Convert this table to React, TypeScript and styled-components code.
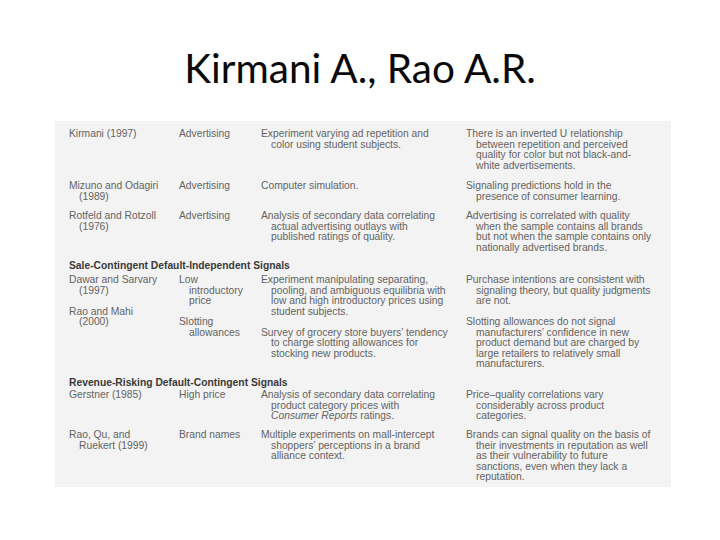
import React from "react";
import styled, { createGlobalStyle } from "styled-components";

const Global = createGlobalStyle`
  html, body { margin: 0; padding: 0; background: #ffffff; }
  body { width: 720px; height: 540px; overflow: hidden; }
`;

const Slide = styled.div`
  width: 720px;
  height: 540px;
  display: flex;
  flex-direction: column;
  align-items: flex-start;
`;

const Title = styled.h1`
  align-self: stretch;
  margin: 41px 0 0 0;
  height: 80px;
  font-family: Lato, "Open Sans", sans-serif;
  font-weight: 400;
  font-size: 40.5px;
  line-height: 53px;
  color: #0a0a0a;
  text-align: center;
`;

const Scan = styled.div`
  margin-left: 55px;
  width: 616px;
  height: 366px;
  box-sizing: border-box;
  padding: 8px 0 0 14px;
  background: #f3f3f3;
  display: flex;
  flex-direction: column;
  font-family: "Liberation Sans", Arial, sans-serif;
  font-size: 10.3px;
  line-height: 10.5px;
  color: #636363;
`;

const Row = styled.div<{ $space: number }>`
  display: grid;
  grid-template-columns: 110px 82px 205px 1fr;
  margin-top: ${(p) => p.$space}px;
`;

const Cell = styled.div`
  display: flex;
  flex-direction: column;
  gap: 10.5px;
`;

const Entry = styled.div`
  display: flex;
  flex-direction: column;
`;

const Line = styled.span`
  white-space: nowrap;
  & + & { padding-left: 10px; }
`;

const SectionHead = styled.div<{ $space: number }>`
  margin-top: ${(p) => p.$space}px;
  font-weight: 700;
  color: #3a3a3a;
  white-space: nowrap;
`;

type E = React.ReactNode[];

const entry = (lines: E, key?: number) => (
  <Entry key={key}>
    {lines.map((l, i) => (
      <Line key={i}>{l}</Line>
    ))}
  </Entry>
);

const SimpleRow = ({ space, cols }: { space: number; cols: E[] }) => (
  <Row $space={space}>
    {cols.map((c, i) => (
      <Cell key={i}>{entry(c)}</Cell>
    ))}
  </Row>
);

export default function App() {
  return (
    <>
      <Global />
      <Slide>
        <Title>Kirmani A., Rao A.R.</Title>
        <Scan>
          <SimpleRow
            space={0}
            cols={[
              ["Kirmani (1997)"],
              ["Advertising"],
              ["Experiment varying ad repetition and", "color using student subjects."],
              [
                "There is an inverted U relationship",
                "between repetition and perceived",
                "quality for color but not black-and-",
                "white advertisements.",
              ],
            ]}
          />
          <SimpleRow
            space={10}
            cols={[
              ["Mizuno and Odagiri", "(1989)"],
              ["Advertising"],
              ["Computer simulation."],
              ["Signaling predictions hold in the", "presence of consumer learning."],
            ]}
          />
          <SimpleRow
            space={9}
            cols={[
              ["Rotfeld and Rotzoll", "(1976)"],
              ["Advertising"],
              [
                "Analysis of secondary data correlating",
                "actual advertising outlays with",
                "published ratings of quality.",
              ],
              [
                "Advertising is correlated with quality",
                "when the sample contains all brands",
                "but not when the sample contains only",
                "nationally advertised brands.",
              ],
            ]}
          />
          <SectionHead $space={8}>Sale-Contingent Default-Independent Signals</SectionHead>
          <Row $space={3.5}>
            <Cell>
              {entry(["Dawar and Sarvary", "(1997)"])}
              {entry(["Rao and Mahi", "(2000)"])}
            </Cell>
            <Cell>
              {entry(["Low", "introductory", "price"])}
              {entry(["Slotting", "allowances"])}
            </Cell>
            <Cell>
              {entry([
                "Experiment manipulating separating,",
                "pooling, and ambiguous equilibria with",
                "low and high introductory prices using",
                "student subjects.",
              ])}
              {entry([
                "Survey of grocery store buyers\u2019 tendency",
                "to charge slotting allowances for",
                "stocking new products.",
              ])}
            </Cell>
            <Cell>
              {entry([
                "Purchase intentions are consistent with",
                "signaling theory, but quality judgments",
                "are not.",
              ])}
              {entry([
                "Slotting allowances do not signal",
                "manufacturers\u2019 confidence in new",
                "product demand but are charged by",
                "large retailers to relatively small",
                "manufacturers.",
              ])}
            </Cell>
          </Row>
          <SectionHead $space={8.5}>Revenue-Risking Default-Contingent Signals</SectionHead>
          <SimpleRow
            space={1.5}
            cols={[
              ["Gerstner (1985)"],
              ["High price"],
              [
                "Analysis of secondary data correlating",
                "product category prices with",
                <>
                  <i>Consumer Reports</i> ratings.
                </>,
              ],
              ["Price\u2013quality correlations vary", "considerably across product", "categories."],
            ]}
          />
          <SimpleRow
            space={8.5}
            cols={[
              ["Rao, Qu, and", "Ruekert (1999)"],
              ["Brand names"],
              [
                "Multiple experiments on mall-intercept",
                "shoppers\u2019 perceptions in a brand",
                "alliance context.",
              ],
              [
                "Brands can signal quality on the basis of",
                "their investments in reputation as well",
                "as their vulnerability to future",
                "sanctions, even when they lack a",
                "reputation.",
              ],
            ]}
          />
        </Scan>
      </Slide>
    </>
  );
}
